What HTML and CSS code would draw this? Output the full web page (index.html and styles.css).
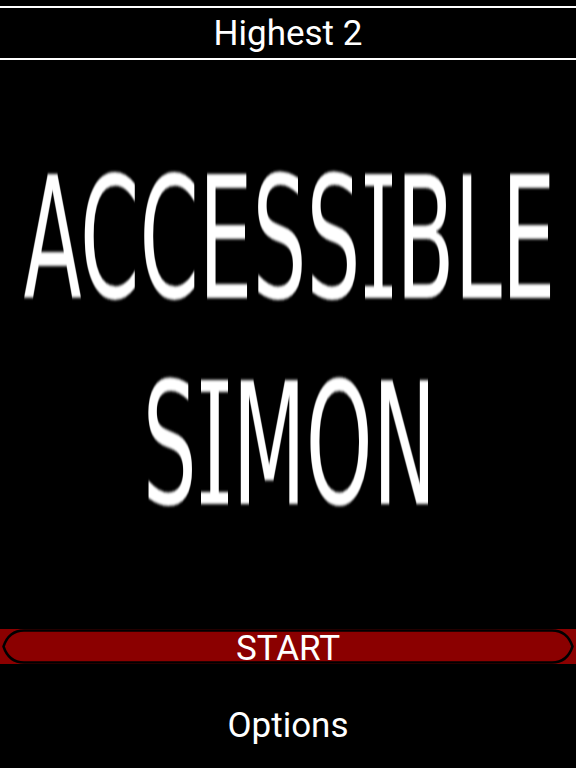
FILE: index.html
```html
<!DOCTYPE html>
<html>
<head>
<meta charset="utf-8">
<link rel="stylesheet" href="styles.css">
</head>
<body>
<div class="screen">
  <header class="topbar"><span class="label">Highest 2</span></header>
  <main class="hero">
    <h1 class="title"><span class="line">ACCESS<span class="si">I</span>BLE</span><span class="line">S<span class="si">I</span>MON</span></h1>
  </main>
  <div class="start">
    <svg class="outline" width="576" height="35" viewBox="0 0 576 35" aria-hidden="true">
      <path d="M24 1.5 L552 1.5 C564 1.5 570 10 572.5 17.5 C570 25 564 33.5 552 33.5 L24 33.5 C12 33.5 6 25 3.5 17.5 C6 10 12 1.5 24 1.5 Z" fill="none" stroke="#000" stroke-width="2.5"/>
    </svg>
    <span class="label start-label">START</span>
  </div>
  <div class="options"><span class="label">Options</span></div>
</div>
</body>
</html>
```
FILE: styles.css
```css
html, body {
  margin: 0;
  padding: 0;
  background: #000;
}
.screen {
  width: 576px;
  height: 768px;
  display: flex;
  flex-direction: column;
  background: #000;
  color: #fff;
  font-family: Roboto, "Liberation Sans", sans-serif;
  overflow: hidden;
}
.label {
  font-size: 35px;
}
.topbar {
  margin-top: 6px;
  border-top: 2px solid #fff;
  border-bottom: 2px solid #fff;
  text-align: center;
  line-height: 50px;
  padding-top: 1px;
  height: 49px;
}
.hero {
  flex: 1;
  padding-top: 76px;
}
.title {
  margin: 0;
  padding-left: 3px;
  font-family: "DejaVu Sans", sans-serif;
  font-weight: normal;
  font-size: 85px;
  line-height: 103px;
  text-align: center;
  transform: scaleY(2);
  transform-origin: top center;
  filter: blur(0.7px);
}
.title .line {
  display: block;
}
.title .si {
  position: relative;
  padding: 0 0.063em;
}
.title .si::before,
.title .si::after {
  content: "";
  position: absolute;
  left: 0.05em;
  right: 0.05em;
  height: 0.075em;
  background: #fff;
}
.title .si::before {
  top: 0.199em;
}
.title .si::after {
  top: 0.853em;
}
.start {
  position: relative;
  height: 35px;
  background: #8b0000;
  text-align: center;
  line-height: 35px;
  padding-top: 2px;
  box-sizing: border-box;
}
.outline {
  position: absolute;
  left: 0;
  top: 0;
}
.start-label {
  position: relative;
}
.options {
  height: 104px;
  padding-top: 40px;
  box-sizing: border-box;
  text-align: center;
  line-height: 44px;
}
```
